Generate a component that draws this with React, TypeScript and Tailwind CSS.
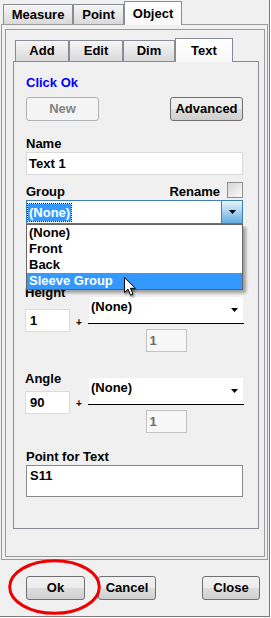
import clsx from 'clsx';

interface TabDef {
    label: string;
    w: string;
    active?: boolean;
}

const outerTabs: TabDef[] = [
    { label: 'Measure', w: 'w-[70px]' },
    { label: 'Point', w: 'w-[51px]' },
    { label: 'Object', w: 'w-[58px]', active: true }
];

const innerTabs: TabDef[] = [
    { label: 'Add', w: 'w-[54px]' },
    { label: 'Edit', w: 'w-[54px]' },
    { label: 'Dim', w: 'w-[52px]' },
    { label: 'Text', w: 'w-[58px]', active: true }
];

const groups = ['(None)', 'Front', 'Back', 'Sleeve Group'];

const button =
    'flex h-[24px] items-center justify-center rounded-[3px] border border-[#707070] bg-[linear-gradient(#f2f2f2_0%,#ebebeb_50%,#dddddd_50%,#cfcfcf_100%)] text-black';

function Tab({ tab, h }: { tab: TabDef; h: string }) {
    return (
        <div
            className={clsx(
                'flex items-center justify-center border border-b-0 border-[#898c95]',
                tab.w,
                tab.active
                    ? 'relative z-10 -mb-px h-[24px] bg-linear-to-b from-white to-[#f8f8f8]'
                    : clsx(h, 'bg-linear-to-b from-[#f6f6f6] to-[#d9d9d9]')
            )}
        >
            {tab.label}
        </div>
    );
}

function Arrow() {
    return (
        <svg width="7" height="4" viewBox="0 0 7 4">
            <polygon points="0,0 7,0 3.5,4" fill="#000" />
        </svg>
    );
}

// combo + fraction line + denominator box, used by Height and Angle
function Scaled({
    label,
    value,
    top,
    inputGap,
    plusTop
}: {
    label: string;
    value: string;
    top: string;
    inputGap: string;
    plusTop: string;
}) {
    return (
        <div className="flex">
            <div className="-ml-px w-[45px] shrink-0">
                <p>{label}</p>
                <div
                    className={clsx(
                        'flex h-[23px] w-[45px] items-center border border-[#dcdcdc] bg-white pl-[4px]',
                        inputGap
                    )}
                >
                    {value}
                </div>
            </div>

            <div className="flex w-[18px] shrink-0 justify-center">
                <span className={clsx('text-[10px] leading-[10px]', plusTop)}>
                    +
                </span>
            </div>

            <div className={clsx('w-[156px] shrink-0', top)}>
                <div className="mx-px flex h-[26px] items-start justify-between bg-white pl-[2px] pr-[5px] pt-[2px]">
                    <span>(None)</span>
                    <span className="mt-[9px] flex">
                        <Arrow />
                    </span>
                </div>
                <div className="h-px w-[156px] bg-black" />
                <div className="mx-auto mt-[5px] flex h-[23px] w-[41px] items-center border border-[#c3c3c3] bg-[#f7f7f7] pl-[3px] text-[#6d6d6d]">
                    1
                </div>
            </div>
        </div>
    );
}

export default function App() {
    return (
        <div className="relative h-[618px] w-[271px] bg-white font-['Liberation_Sans',Arial,sans-serif] text-[13px] font-bold leading-4 text-black">
            <div className="h-[617px] w-[270px] border-r border-b border-[#7a7a7a] bg-[#f0f0f0]">
                {/* Outer tabs */}
                <div className="flex h-[24px] items-end pl-[3px]">
                    {outerTabs.map((t) => (
                        <Tab key={t.label} tab={t} h="h-[20px]" />
                    ))}
                </div>

                <div className="ml-px h-[536px] w-[267px] border border-[#9b9b9b] pt-[4px]">
                    <div className="ml-[3px] h-[528px] w-[260px] border border-[#9b9b9b] pt-[8px]">
                        <div className="ml-[7px]">
                            {/* Inner tabs */}
                            <div className="flex h-[23px] items-end pl-[2px]">
                                {innerTabs.map((t) => (
                                    <Tab key={t.label} tab={t} h="h-[21px]" />
                                ))}
                            </div>

                            {/* Text panel */}
                            <div className="h-[468px] w-[246px] border border-[#898c95] bg-[#f0f0f0] pl-[12px] pr-[15px]">
                                <p className="mt-[13px] text-[#0000ff]">Click Ok</p>

                                <div className="mt-[6px] flex justify-between">
                                    <div className="flex h-[24px] w-[73px] items-center justify-center rounded-[3px] border border-[#adb2b5] bg-[#f4f4f4] text-[#838383]">
                                        New
                                    </div>
                                    <div className={clsx(button, 'w-[73px]')}>
                                        Advanced
                                    </div>
                                </div>

                                <p className="mt-[15px]">Name</p>
                                <div className="flex h-[23px] items-center border border-[#dadada] bg-white pl-[2px]">
                                    Text 1
                                </div>

                                <div className="mt-[7px] flex items-end justify-between">
                                    <span>Group</span>
                                    <div className="flex items-end gap-[7px]">
                                        <span>Rename</span>
                                        <div className="mb-[2px] h-[16px] w-[16px] border border-[#8e8f8f] bg-linear-to-br from-[#d6d6d6] to-[#fbfbfb]" />
                                    </div>
                                </div>

                                {/* Group combo with open list */}
                                <div className="relative">
                                    <div className="flex h-[24px] items-center border border-[#3c7fb1] bg-white">
                                        <span className="ml-px h-[17px] bg-[#3399ff] px-px leading-[17px] text-white outline-1 outline-dotted outline-[#1a1a1a]">
                                            (None)
                                        </span>
                                        <div className="ml-auto flex h-full w-[21px] items-center justify-center border-l border-[#3c7fb1] bg-linear-to-b from-[#e6f5fd] to-[#62ace0]">
                                            <Arrow />
                                        </div>
                                    </div>

                                    <div className="absolute top-full left-0 z-20 h-[66px] w-full border border-[#646464] bg-white shadow-[3px_3px_3px_rgba(0,0,0,0.35)]">
                                        {groups.map((g) => (
                                            <div
                                                key={g}
                                                className={clsx(
                                                    'h-[16px] pl-[2px]',
                                                    g === 'Sleeve Group' &&
                                                        'bg-[#3399ff] text-white'
                                                )}
                                            >
                                                {g}
                                            </div>
                                        ))}
                                    </div>
                                </div>

                                <div className="mt-[61px]">
                                    <Scaled
                                        label="Height"
                                        value="1"
                                        top="pt-[12px]"
                                        inputGap="mt-[8px]"
                                        plusTop="mt-[33px]"
                                    />
                                </div>

                                <div className="mt-[19px]">
                                    <Scaled
                                        label="Angle"
                                        value="90"
                                        top="pt-[7px]"
                                        inputGap="mt-[4px]"
                                        plusTop="mt-[28px]"
                                    />
                                </div>

                                <p className="mt-[16px]">Point for Text</p>
                                <div className="h-[32px] border border-[#8a8a8a] bg-white pl-[3px] pt-[2px]">
                                    S11
                                </div>
                            </div>
                        </div>
                    </div>
                </div>

                {/* Dialog buttons */}
                <div className="mt-[16px] flex pl-[26px]">
                    <div className={clsx(button, 'w-[59px]')}>Ok</div>
                    <div className={clsx(button, 'ml-[13px] w-[58px]')}>Cancel</div>
                    <div className={clsx(button, 'ml-[46px] w-[58px]')}>Close</div>
                </div>
            </div>

            {/* mouse pointer */}
            <svg
                className="absolute top-[277px] left-[124px] z-30 drop-shadow-[1px_2px_1px_rgba(0,0,0,0.4)]"
                width="14"
                height="20"
                viewBox="0 0 14 20"
            >
                <path
                    d="M0.5 0.5 L0.5 15.5 L4 12.2 L6.6 18.2 L9 17.2 L6.5 11.3 L11.3 11.3 Z"
                    fill="#fff"
                    stroke="#000"
                    strokeWidth="1"
                    strokeLinejoin="round"
                />
            </svg>

            {/* red annotation around Ok */}
            <svg
                className="absolute top-[559px] left-[8px] z-30"
                width="93"
                height="56"
                viewBox="0 0 93 56"
            >
                <ellipse
                    cx="46.5"
                    cy="28"
                    rx="44.8"
                    ry="26.3"
                    fill="none"
                    stroke="#ee0000"
                    strokeWidth="3"
                />
            </svg>
        </div>
    );
}
